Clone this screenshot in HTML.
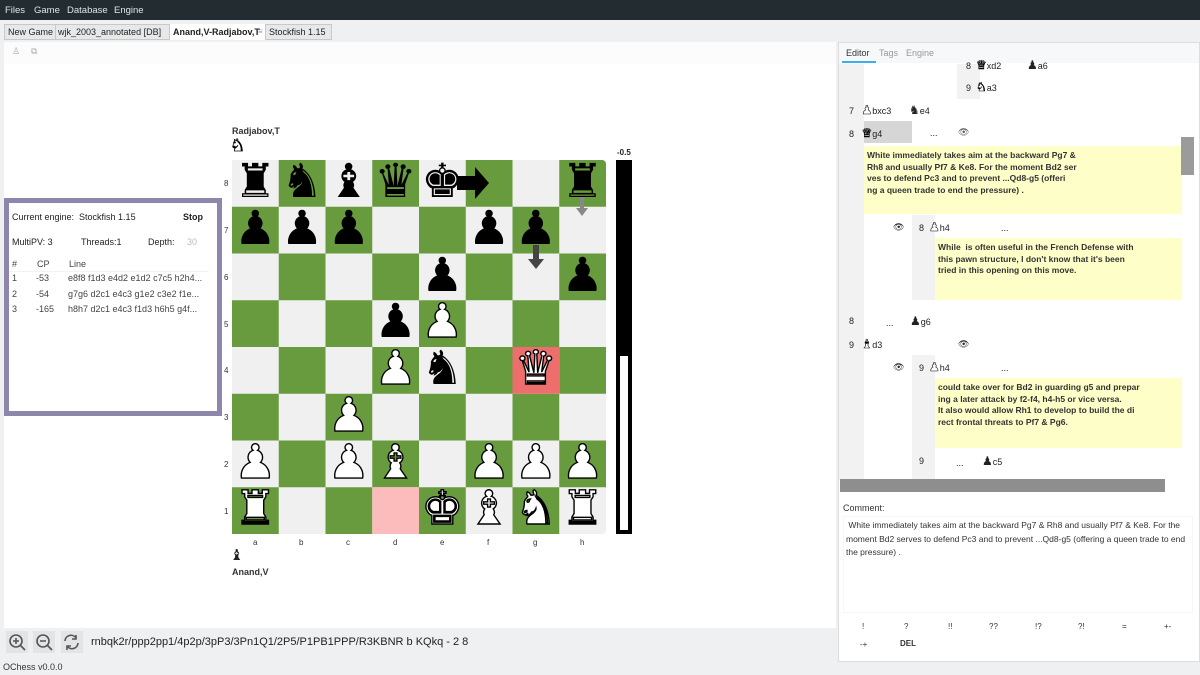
<!DOCTYPE html>
<html><head><meta charset="utf-8"><style>
*{margin:0;padding:0;box-sizing:border-box}
body{width:1200px;height:675px;overflow:hidden;background:#eff0f1;font-family:"Liberation Sans","DejaVu Sans",sans-serif;font-size:9px;color:#222;position:relative}
.a{position:absolute}
.menu{left:0;top:0;width:1200px;height:20px;background:#232c31;color:#e0e4e6;font-size:9.5px}
.menu span{position:absolute;top:5px}
.pc{position:absolute;width:46.75px;height:46.75px;text-align:center;line-height:44px;font-size:47px;font-family:"DejaVu Sans",sans-serif}
.w{color:#fff;-webkit-text-stroke:1.4px #000}
.b{color:#000}
.lbl{position:absolute;font-size:8px;color:#333}
.mv{position:absolute;font-size:9px;color:#222}
.g{font-family:"DejaVu Sans",sans-serif;font-size:12px;color:#222}
.gw{font-family:"DejaVu Sans",sans-serif;font-size:12px;color:#fff;-webkit-text-stroke:0.6px #000}
.cm{position:absolute;background:#fefec8;font-size:8.5px;font-weight:bold;line-height:11.5px;color:#333;padding:4px 3px}
</style></head><body>
<div class="a menu"><span style="left:5px">Files</span><span style="left:34px">Game</span><span style="left:67px">Database</span><span style="left:114px">Engine</span></div>
<div class="a" style="left:0;top:20px;width:1200px;height:22px;background:#eff0f1"></div>
<div class="a" style="left:4px;top:24px;width:328px;height:16px;border:1px solid #c8c8c8;background:#e7e8e9"></div>
<div class="a" style="left:8px;top:27px;font-size:9px">New Game</div>
<div class="a" style="left:55px;top:24px;height:16px;border-left:1px solid #c8c8c8"></div>
<div class="a" style="left:58px;top:27px;font-size:9px">wjk_2003_annotated [DB]</div>
<div class="a" style="left:169px;top:24px;width:97px;height:16px;background:#fff;border-left:1px solid #c8c8c8;border-right:1px solid #c8c8c8"></div>
<div class="a" style="left:173px;top:27px;font-size:9px;font-weight:bold">Anand,V-Radjabov,T</div>
<div class="a" style="left:258px;top:27px;font-size:8px;color:#999">≡</div>
<div class="a" style="left:269px;top:27px;font-size:9px">Stockfish 1.15</div>
<div class="a" style="left:4px;top:42px;width:832px;height:586px;background:#fff"></div>
<div class="a" style="left:4px;top:42px;width:832px;height:22px;background:#fcfcfc"></div>
<div class="a" style="left:12px;top:47px;font-size:9px;color:#aab;font-family:'DejaVu Sans'">♙</div>
<div class="a" style="left:31px;top:47px;font-size:9px;color:#aab;font-family:'DejaVu Sans'">⧉</div>
<div class="a" style="left:4px;top:198px;width:218px;height:218px;border:5px solid #8f86ab;background:#fff"></div>
<div class="a" style="left:12px;top:212px">Current engine:&nbsp; Stockfish 1.15</div>
<div class="a" style="left:183px;top:212px;font-weight:bold">Stop</div>
<div class="a" style="left:12px;top:237px">MultiPV: 3</div>
<div class="a" style="left:81px;top:237px">Threads:1</div>
<div class="a" style="left:148px;top:237px">Depth:</div>
<div class="a" style="left:187px;top:237px;color:#bbb">30</div>
<div class="a" style="left:12px;top:259px;color:#444">#</div><div class="a" style="left:37px;top:259px;color:#444">CP</div><div class="a" style="left:69px;top:259px;color:#444">Line</div>
<div class="a" style="left:9px;top:271px;width:200px;border-top:1px solid #f3f3f3"></div>
<div class="a" style="left:12px;top:273px;color:#444">1</div><div class="a" style="left:36px;top:273px;color:#444">-53</div><div class="a" style="left:68px;top:273px;color:#444">e8f8 f1d3 e4d2 e1d2 c7c5 h2h4...</div>
<div class="a" style="left:12px;top:289px;color:#444">2</div><div class="a" style="left:36px;top:289px;color:#444">-54</div><div class="a" style="left:68px;top:289px;color:#444">g7g6 d2c1 e4c3 g1e2 c3e2 f1e...</div>
<div class="a" style="left:12px;top:304px;color:#444">3</div><div class="a" style="left:36px;top:304px;color:#444">-165</div><div class="a" style="left:68px;top:304px;color:#444">h8h7 d2c1 e4c3 f1d3 h6h5 g4f...</div>
<div class="a" style="left:232px;top:126px;font-weight:bold;font-size:9px;color:#333">Radjabov,T</div>
<div class="a" style="left:230px;top:136px;font-size:17px;color:#fff;-webkit-text-stroke:0.8px #000;font-family:'DejaVu Sans'">♞</div>
<div class="a" style="left:232px;top:160px;width:374px;height:374px;border-radius:0 4px 4px 0;overflow:hidden;background:#f0f0f0">
<svg width="374" height="374" style="position:absolute;left:0;top:0">
<g fill="#689a3e">
<rect x="46.75" y="0" width="46.75" height="46.75"/><rect x="140.25" y="0" width="46.75" height="46.75"/><rect x="233.75" y="0" width="46.75" height="46.75"/><rect x="327.25" y="0" width="46.75" height="46.75"/>
<rect x="0" y="46.75" width="46.75" height="46.75"/><rect x="93.5" y="46.75" width="46.75" height="46.75"/><rect x="187" y="46.75" width="46.75" height="46.75"/><rect x="280.5" y="46.75" width="46.75" height="46.75"/>
<rect x="46.75" y="93.5" width="46.75" height="46.75"/><rect x="140.25" y="93.5" width="46.75" height="46.75"/><rect x="233.75" y="93.5" width="46.75" height="46.75"/><rect x="327.25" y="93.5" width="46.75" height="46.75"/>
<rect x="0" y="140.25" width="46.75" height="46.75"/><rect x="93.5" y="140.25" width="46.75" height="46.75"/><rect x="187" y="140.25" width="46.75" height="46.75"/><rect x="280.5" y="140.25" width="46.75" height="46.75"/>
<rect x="46.75" y="187" width="46.75" height="46.75"/><rect x="140.25" y="187" width="46.75" height="46.75"/><rect x="233.75" y="187" width="46.75" height="46.75"/><rect x="327.25" y="187" width="46.75" height="46.75"/>
<rect x="0" y="233.75" width="46.75" height="46.75"/><rect x="93.5" y="233.75" width="46.75" height="46.75"/><rect x="187" y="233.75" width="46.75" height="46.75"/><rect x="280.5" y="233.75" width="46.75" height="46.75"/>
<rect x="46.75" y="280.5" width="46.75" height="46.75"/><rect x="140.25" y="280.5" width="46.75" height="46.75"/><rect x="233.75" y="280.5" width="46.75" height="46.75"/><rect x="327.25" y="280.5" width="46.75" height="46.75"/>
<rect x="0" y="327.25" width="46.75" height="46.75"/><rect x="93.5" y="327.25" width="46.75" height="46.75"/><rect x="187" y="327.25" width="46.75" height="46.75"/><rect x="280.5" y="327.25" width="46.75" height="46.75"/>
</g>
<rect x="140.25" y="327.25" width="46.75" height="46.75" fill="#fcbcbc"/>
<rect x="280.5" y="187" width="46.75" height="46.75" fill="#ee6e6e"/>
</svg>
</div>
<div class="a" style="left:232px;top:160px;width:374px;height:374px">
<div class="pc b" style="left:0;top:0">♜</div>
<div class="pc b" style="left:46.75px;top:0">♞</div>
<div class="pc b" style="left:93.5px;top:0">♝</div>
<div class="pc b" style="left:140.25px;top:0">♛</div>
<div class="pc b" style="left:187px;top:0">♚</div>
<div class="pc b" style="left:327.25px;top:0">♜</div>
<div class="pc b" style="left:0;top:46.75px">♟</div>
<div class="pc b" style="left:46.75px;top:46.75px">♟</div>
<div class="pc b" style="left:93.5px;top:46.75px">♟</div>
<div class="pc b" style="left:233.75px;top:46.75px">♟</div>
<div class="pc b" style="left:280.5px;top:46.75px">♟</div>
<div class="pc b" style="left:187px;top:93.5px">♟</div>
<div class="pc b" style="left:327.25px;top:93.5px">♟</div>
<div class="pc b" style="left:140.25px;top:140.25px">♟</div>
<div class="pc w" style="left:187px;top:140.25px">♟</div>
<div class="pc w" style="left:140.25px;top:187px">♟</div>
<div class="pc b" style="left:187px;top:187px">♞</div>
<div class="pc w" style="left:280.5px;top:187px">♛</div>
<div class="pc w" style="left:93.5px;top:233.75px">♟</div>
<div class="pc w" style="left:0;top:280.5px">♟</div>
<div class="pc w" style="left:93.5px;top:280.5px">♟</div>
<div class="pc w" style="left:140.25px;top:280.5px">♝</div>
<div class="pc w" style="left:233.75px;top:280.5px">♟</div>
<div class="pc w" style="left:280.5px;top:280.5px">♟</div>
<div class="pc w" style="left:327.25px;top:280.5px">♟</div>
<div class="pc w" style="left:0;top:327.25px">♜</div>
<div class="pc w" style="left:187px;top:327.25px">♚</div>
<div class="pc w" style="left:233.75px;top:327.25px">♝</div>
<div class="pc w" style="left:280.5px;top:327.25px">♞</div>
<div class="pc w" style="left:327.25px;top:327.25px">♜</div>
<svg width="374" height="374" style="position:absolute;left:0;top:0">
<path d="M225 16h18v-9l14 16-14 16v-9h-18z" fill="#000"/>
<path d="M348 37h4v11h4l-6 8-6-8h4z" fill="#888"/>
<path d="M301 85h6v14h5l-8 10-8-10h5z" fill="#444"/>
</svg>
</div>
<div class="lbl" style="left:224px;top:179px">8</div><div class="lbl" style="left:224px;top:226px">7</div><div class="lbl" style="left:224px;top:273px">6</div><div class="lbl" style="left:224px;top:320px">5</div><div class="lbl" style="left:224px;top:366px">4</div><div class="lbl" style="left:224px;top:413px">3</div><div class="lbl" style="left:224px;top:460px">2</div><div class="lbl" style="left:224px;top:507px">1</div>
<div class="lbl" style="left:253px;top:538px">a</div><div class="lbl" style="left:299px;top:538px">b</div><div class="lbl" style="left:346px;top:538px">c</div><div class="lbl" style="left:393px;top:538px">d</div><div class="lbl" style="left:440px;top:538px">e</div><div class="lbl" style="left:487px;top:538px">f</div><div class="lbl" style="left:533px;top:538px">g</div><div class="lbl" style="left:580px;top:538px">h</div>
<div class="a" style="left:230px;top:546px;font-size:15px;font-family:'DejaVu Sans'">♝</div>
<div class="a" style="left:232px;top:567px;font-weight:bold;font-size:9px;color:#333">Anand,V</div>
<div class="a" style="left:617px;top:148px;font-size:8px;font-weight:bold">-0.5</div>
<div class="a" style="left:616px;top:160px;width:16px;height:374px;background:#000"></div>
<div class="a" style="left:620px;top:356px;width:8px;height:174px;background:#fff"></div>
<div class="a" style="left:4px;top:628px;width:832px;height:28px;background:#eff0f1"></div>
<div class="a" style="left:6px;top:631px;width:22px;height:22px;background:#e3e4e5"></div>
<div class="a" style="left:33px;top:631px;width:22px;height:22px;background:#e3e4e5"></div>
<div class="a" style="left:61px;top:631px;width:22px;height:22px;background:#e3e4e5"></div>
<svg class="a" style="left:6px;top:631px" width="80" height="22">
<g fill="none" stroke="#555" stroke-width="1.6">
<circle cx="10" cy="10" r="6"/><path d="M14.5 14.5l4.5 4.5M7 10h6M10 7v6"/>
<circle cx="37" cy="10" r="6"/><path d="M41.5 14.5l4.5 4.5M34 10h6"/>
<path d="M59 10a6 6 0 0 1 11-3M72 12a6 6 0 0 1-11 3"/><path d="M70 4v4h-4M61 19v-4h4"/>
</g></svg>
<div class="a" style="left:91px;top:636px;font-size:11px;color:#222">rnbqk2r/ppp2pp1/4p2p/3pP3/3Pn1Q1/2P5/P1PB1PPP/R3KBNR b KQkq - 2 8</div>
<div class="a" style="left:3px;top:662px;font-size:9px;color:#333">OChess v0.0.0</div>
<div class="a" style="left:838px;top:42px;width:362px;height:620px;background:#fff;border:1px solid #ddd"></div>
<div class="a" style="left:839px;top:43px;width:360px;height:20px;background:#f7f8f9"></div>
<div class="a" style="left:846px;top:48px;font-size:9px;color:#333">Editor</div>
<div class="a" style="left:842px;top:61px;width:34px;height:2px;background:#3daee9"></div>
<div class="a" style="left:879px;top:48px;font-size:9px;color:#999">Tags</div>
<div class="a" style="left:906px;top:48px;font-size:9px;color:#999">Engine</div>
<div class="a" style="left:839px;top:64px;width:25px;height:416px;background:#f2f2f2"></div>
<div class="a" style="left:957px;top:64px;width:23px;height:35px;background:#f2f2f2"></div>
<div class="mv" style="left:966px;top:58px">8 &nbsp;<span class="gw">♛</span>xd2</div><div class="mv" style="left:1027px;top:58px"><span class="g">♟</span>a6</div>
<div class="mv" style="left:966px;top:80px">9 &nbsp;<span class="gw">♞</span>a3</div>
<div class="mv" style="left:849px;top:103px">7 &nbsp;&nbsp;<span class="gw">♟</span>bxc3</div><div class="mv" style="left:909px;top:103px"><span class="g">♞</span>e4</div>
<div class="a" style="left:864px;top:121px;width:48px;height:22px;background:#d6d6d6"></div>
<div class="mv" style="left:849px;top:126px">8 &nbsp;&nbsp;<span class="gw">♛</span>g4</div><div class="mv" style="left:930px;top:128px">...</div><div class="mv" style="left:958px;top:127px;color:#555">👁</div>
<div class="cm" style="left:864px;top:146px;width:318px;height:68px">White immediately takes aim at the backward Pg7 &amp;<br>Rh8 and usually Pf7 &amp; Ke8. For the moment Bd2 ser<br>ves to defend Pc3 and to prevent ...Qd8-g5 (offeri<br>ng a queen trade to end the pressure) .</div>
<div class="a" style="left:1181px;top:137px;width:13px;height:38px;background:#9b9b9b"></div>
<div class="a" style="left:912px;top:215px;width:23px;height:85px;background:#f2f2f2"></div>
<div class="mv" style="left:893px;top:222px">👁</div><div class="mv" style="left:919px;top:220px">8 &nbsp;<span class="gw">♟</span>h4</div><div class="mv" style="left:1001px;top:223px">...</div>
<div class="cm" style="left:935px;top:238px;width:247px;height:62px">While &nbsp;is often useful in the French Defense with<br>this pawn structure, I don't know that it's been<br>tried in this opening on this move.</div>
<div class="mv" style="left:849px;top:316px">8</div><div class="mv" style="left:886px;top:318px">...</div><div class="mv" style="left:910px;top:314px"><span class="g">♟</span>g6</div>
<div class="mv" style="left:849px;top:337px">9 &nbsp;&nbsp;<span class="gw">♝</span>d3</div><div class="mv" style="left:958px;top:339px">👁</div>
<div class="a" style="left:912px;top:355px;width:23px;height:125px;background:#f2f2f2"></div>
<div class="mv" style="left:893px;top:362px">👁</div><div class="mv" style="left:919px;top:360px">9 &nbsp;<span class="gw">♟</span>h4</div><div class="mv" style="left:1001px;top:363px">...</div>
<div class="cm" style="left:935px;top:378px;width:247px;height:70px">could take over for Bd2 in guarding g5 and prepar<br>ing a later attack by f2-f4, h4-h5 or vice versa.<br>It also would allow Rh1 to develop to build the di<br>rect frontal threats to Pf7 &amp; Pg6.</div>
<div class="mv" style="left:919px;top:456px">9</div><div class="mv" style="left:956px;top:458px">...</div><div class="mv" style="left:982px;top:454px"><span class="g">♟</span>c5</div>
<div class="a" style="left:840px;top:479px;width:325px;height:13px;background:#8e8e8e"></div>
<div class="a" style="left:843px;top:503px;font-size:9px;color:#333">Comment:</div>
<div class="a" style="left:843px;top:516px;width:350px;height:97px;border:1px solid #f6f6f6;font-size:8.5px;line-height:13.5px;color:#333;padding:2px">&nbsp;White immediately takes aim at the backward Pg7 &amp; Rh8 and usually Pf7 &amp; Ke8. For the moment Bd2 serves to defend Pc3 and to prevent ...Qd8-g5 (offering a queen trade to end the pressure) .</div>
<div class="a" style="left:862px;top:622px;font-size:8px;color:#333">!</div>
<div class="a" style="left:904px;top:622px;font-size:8px;color:#333">?</div>
<div class="a" style="left:948px;top:622px;font-size:8px;color:#333">!!</div>
<div class="a" style="left:989px;top:622px;font-size:8px;color:#333">??</div>
<div class="a" style="left:1035px;top:622px;font-size:8px;color:#333">!?</div>
<div class="a" style="left:1078px;top:622px;font-size:8px;color:#333">?!</div>
<div class="a" style="left:1122px;top:622px;font-size:8px;color:#333">=</div>
<div class="a" style="left:1164px;top:622px;font-size:8px;color:#333">+-</div>
<div class="a" style="left:860px;top:640px;font-size:8px;color:#333">-+</div>
<div class="a" style="left:900px;top:639px;font-size:8px;color:#333;font-weight:bold">DEL</div>
</body></html>
